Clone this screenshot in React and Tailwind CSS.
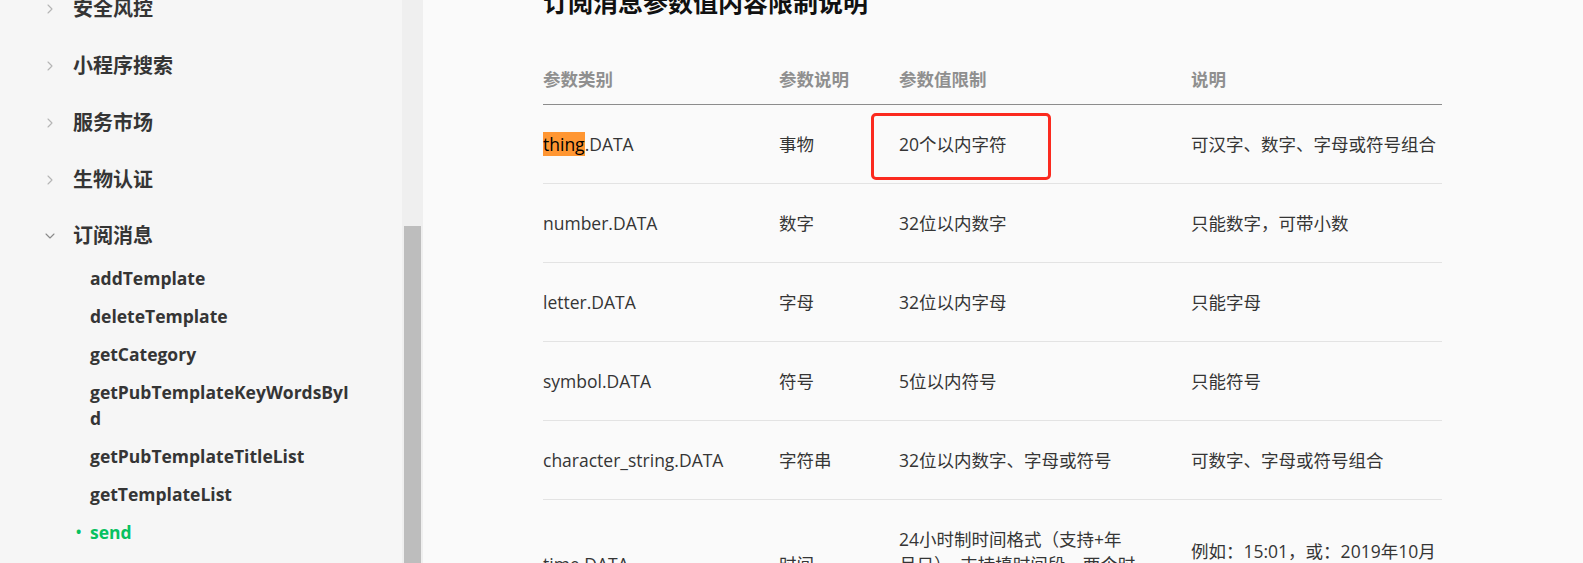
import { ChevronRight, ChevronDown } from "lucide-react";

const topItems = ["安全风控", "小程序搜索", "服务市场", "生物认证"];

const subItems = [
  "addTemplate",
  "deleteTemplate",
  "getCategory",
  "getPubTemplateKeyWordsById",
  "getPubTemplateTitleList",
  "getTemplateList",
];

const rows = [
  { type: "number.DATA", desc: "数字", limit: "32位以内数字", note: "只能数字，可带小数" },
  { type: "letter.DATA", desc: "字母", limit: "32位以内字母", note: "只能字母" },
  { type: "symbol.DATA", desc: "符号", limit: "5位以内符号", note: "只能符号" },
  { type: "character_string.DATA", desc: "字符串", limit: "32位以内数字、字母或符号", note: "可数字、字母或符号组合" },
  {
    type: "time.DATA",
    desc: "时间",
    limit: "24小时制时间格式（支持+年月日），支持填时间段，两个时间点之间用“~”符号连接",
    note: "例如：15:01，或：2019年10月1日 15:01",
  },
];

const font = { fontFamily: '"Open Sans", "Noto Sans CJK SC", sans-serif' };

function Sidebar() {
  return (
    <aside className="w-[402px] shrink-0 h-full overflow-hidden bg-[#f6f6f6]">
      <div className="-mt-[20px] pl-[42px]">
        {topItems.map((t) => (
          <div key={t} className="flex items-center h-[57px]">
            <span className="w-[31px] flex items-center text-[#b5b5b5]">
              <ChevronRight size={16} strokeWidth={1.6} />
            </span>
            <span className="text-[20px] leading-6 font-bold text-[#353535]">{t}</span>
          </div>
        ))}
        <div className="flex items-center pt-4 pb-[11px]">
          <span className="w-[31px] flex items-center text-[#8a8a8a]">
            <ChevronDown size={16} strokeWidth={1.6} />
          </span>
          <span className="text-[20px] leading-6 font-bold text-[#353535]">订阅消息</span>
        </div>
        <ul className="pl-[48px] w-[316px]">
          {subItems.map((s) => (
            <li key={s} className="py-[6px] text-[17.5px] leading-[26px] font-bold text-[#353535] break-all">
              {s}
            </li>
          ))}
          <li className="relative py-[6px] text-[17.5px] leading-[26px] font-bold text-[#07c160]">
            <span className="absolute -left-[14px] top-[6px] text-[14px]">•</span>
            send
          </li>
        </ul>
      </div>
    </aside>
  );
}

function Scrollbar() {
  return (
    <div className="w-[21px] shrink-0 h-full bg-[#efefef] flex flex-col pt-[226px] px-[2px]">
      <div className="flex-1 bg-[#bdbdbd]" />
    </div>
  );
}

function Cell({ children, className = "" }) {
  return <td className={"align-middle py-[26.5px] " + className}>{children}</td>;
}

export default function App() {
  return (
    <div style={font} className="flex w-[1583px] h-[563px] overflow-hidden bg-[#fafafa]">
      <Sidebar />
      <Scrollbar />
      <main className="flex-1 pl-[120px] overflow-hidden">
        <h2 className="-mt-[15px] text-[25px] leading-[34px] font-bold text-[#111]">订阅消息参数值内容限制说明</h2>
        <table className="mt-[4px] w-[899px] table-fixed border-collapse text-[17.5px] leading-[25px] text-[#353535]">
          <colgroup>
            <col className="w-[236px]" />
            <col className="w-[120px]" />
            <col className="w-[292px]" />
            <col className="w-[251px]" />
          </colgroup>
          <thead>
            <tr className="border-b border-[#8c8c8c] text-left">
              <th className="pt-[44px] pb-[12px] font-bold text-[#8f8f8f]">参数类别</th>
              <th className="pt-[44px] pb-[12px] font-bold text-[#8f8f8f]">参数说明</th>
              <th className="pt-[44px] pb-[12px] font-bold text-[#8f8f8f]">参数值限制</th>
              <th className="pt-[44px] pb-[12px] font-bold text-[#8f8f8f]">说明</th>
            </tr>
          </thead>
          <tbody>
            <tr className="border-b border-[#e3e3e3]">
              <Cell>
                <span className="bg-[#ff9632] text-black">thing</span>.DATA
              </Cell>
              <Cell>事物</Cell>
              <Cell className="relative">
                20个以内字符
                <div className="absolute -left-[28px] top-[8px] w-[180px] h-[67px] border-[3px] border-[#fb2a1f] rounded-[5px]" />
              </Cell>
              <Cell>可汉字、数字、字母或符号组合</Cell>
            </tr>
            {rows.map((r) => (
              <tr key={r.type} className="border-b border-[#e3e3e3]">
                <Cell>{r.type}</Cell>
                <Cell>{r.desc}</Cell>
                <Cell>
                  <div className="max-w-[238px]">{r.limit}</div>
                </Cell>
                <Cell>
                  <div className="max-w-[246px]">{r.note}</div>
                </Cell>
              </tr>
            ))}
          </tbody>
        </table>
      </main>
    </div>
  );
}
